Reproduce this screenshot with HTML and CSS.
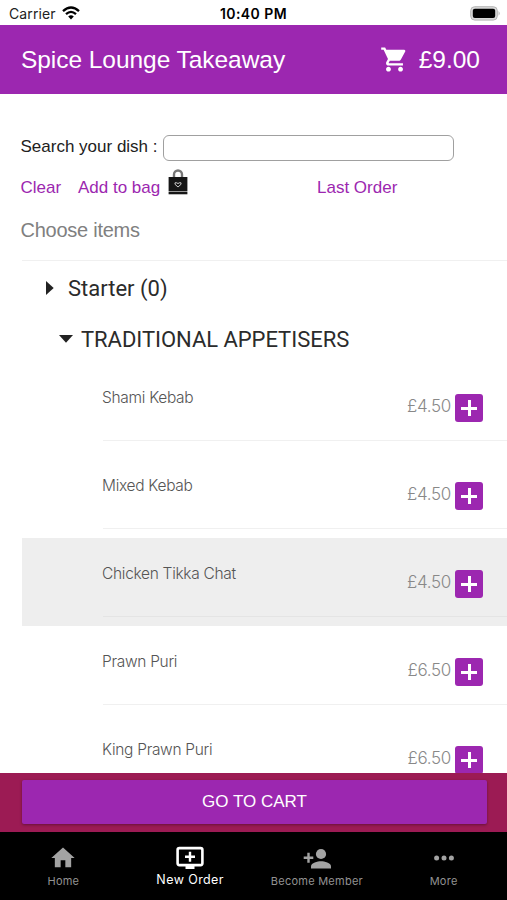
FILE: index.html
```html
<!DOCTYPE html>
<html lang="en">
<head>
<meta charset="utf-8">
<title>Spice Lounge Takeaway</title>
<link rel="stylesheet" href="styles.css">
</head>
<body>
<div class="app">
  <div class="status">
    <span class="carrier">Carrier</span>
    <svg class="wifi" viewBox="0 0 18 14" width="18" height="14"><g fill="none" stroke="#000" stroke-width="2.3"><path d="M1 5.2Q9-2.2 17 5.2"/><path d="M4 8.2Q9 3.6 14 8.2"/></g><path d="M6.2 10.4Q9 8 11.8 10.4L9 13.4Z"/></svg>
    <span class="time">10:40 PM</span>
    <svg class="battery" viewBox="0 0 31 15" width="31" height="15"><rect x=".7" y=".7" width="26.6" height="13.4" rx="4" fill="#d9d9d9" stroke="#b5b5b5" stroke-width="1"/><rect x="2.8" y="2.7" width="22.4" height="9.4" rx="2"/><path d="M28.6 5Q30.6 7.4 28.6 9.8Z" fill="#a9a9a9"/></svg>
  </div>
  <header class="header">
    <h1 class="title">Spice Lounge Takeaway</h1>
    <svg class="cart" viewBox="0 0 24 24" width="29" height="29"><path fill="#fff" d="M7 18c-1.1 0-1.99.9-1.99 2S5.9 22 7 22s2-.9 2-2-.9-2-2-2zM1 2v2h2l3.6 7.59-1.35 2.45c-.16.28-.25.61-.25.96 0 1.1.9 2 2 2h12v-2H7.42c-.14 0-.25-.11-.25-.25l.03-.12.9-1.63h7.45c.75 0 1.41-.41 1.75-1.03l3.58-6.49A1 1 0 0 0 20 4H5.21l-.94-2H1zm16 16c-1.1 0-1.99.9-1.99 2s.89 2 1.99 2 2-.9 2-2-.9-2-2-2z"/></svg>
    <span class="total">£9.00</span>
  </header>
  <main class="content">
    <div class="search"><label for="dish">Search your dish :</label><input id="dish" type="text"></div>
    <div class="links">
      <a class="clear">Clear</a><a class="add">Add to bag</a>
      <svg class="bag" viewBox="0 0 20 26" width="20" height="26"><path d="M6 9V5.5a4 4 0 0 1 8 0V9" fill="none" stroke="#777" stroke-width="2.4"/><path d="M.6 8h18.8v14H.6z" fill="#161616"/><path d="M.6 22h18.800v1H.6z" fill="#999"/><path d="M.6 23h18.800v2.300H.6z" fill="#161616"/><path d="M10 18l-3-2.700v-1.500h1.800l1.200.8 1.200-.8H13v1.500z" fill="none" stroke="#ccc" stroke-width="1"/></svg>
      <a class="last">Last Order</a>
    </div>
    <p class="choose">Choose items</p>
    <section class="menu">
      <h2 class="category"><svg viewBox="0 0 8 14" width="8" height="14"><path d="M0 0l7.7 7L0 14z" fill="#222"/></svg><span>Starter (0)</span></h2>
      <h3 class="subcategory"><svg viewBox="0 0 14 8" width="14" height="8"><path d="M0 0h14L7 7.8z" fill="#222"/></svg><span>TRADITIONAL APPETISERS</span></h3>
      <ul class="dishes">
        <li class="dish"><div class="line"><span class="name">Shami Kebab</span><span class="price">£4.50</span><button class="plus" aria-label="Add"></button></div></li>
        <li class="dish"><div class="line"><span class="name">Mixed Kebab</span><span class="price">£4.50</span><button class="plus" aria-label="Add"></button></div></li>
        <li class="dish active"><div class="line"><span class="name">Chicken Tikka Chat</span><span class="price">£4.50</span><button class="plus" aria-label="Add"></button></div></li>
        <li class="dish"><div class="line"><span class="name">Prawn Puri</span><span class="price">£6.50</span><button class="plus" aria-label="Add"></button></div></li>
        <li class="dish"><div class="line"><span class="name">King Prawn Puri</span><span class="price">£6.50</span><button class="plus" aria-label="Add"></button></div></li>
      </ul>
    </section>
  </main>
  <div class="checkout"><button class="go">GO TO CART</button></div>
  <nav class="tabs">
    <a class="tab home"><svg viewBox="0 0 24 24" width="28" height="28"><path fill="#a3a3a3" d="M10 20v-6h4v6h5v-8h3L12 3 2 12h3v8z"/></svg><span>Home</span></a>
    <a class="tab new"><svg viewBox="0 0 28 24" width="28" height="24"><rect x="1.6" y="2.1" width="24.8" height="17" rx="1.8" fill="none" stroke="#fff" stroke-width="2.6"/><path d="M9.5 19h9v4h-9z" fill="#fff"/><path d="M14 5.8v10M9 10.8h10" stroke="#fff" stroke-width="2.4"/></svg><span>New Order</span></a>
    <a class="tab member"><svg viewBox="0 0 28 22" width="28" height="22"><circle cx="18" cy="6" r="5.1" fill="#a3a3a3"/><path d="M8 20.5v-2.3c0-3.4 6.6-5 10-5s10 1.600 10 5v2.300z" fill="#a3a3a3"/><path d="M5.500 4.700v10M.7 9.700h9.600" stroke="#a3a3a3" stroke-width="2.400"/></svg><span>Become Member</span></a>
    <a class="tab more"><svg viewBox="0 0 20 6" width="20" height="6"><g fill="#a3a3a3"><circle cx="2.600" cy="3" r="2.500"/><circle cx="10" cy="3" r="2.500"/><circle cx="17.400" cy="3" r="2.500"/></g></svg><span>More</span></a>
  </nav>
</div>
</body>
</html>
```
FILE: styles.css
```css
* { box-sizing: border-box; }
body { margin: 0; font-family: "Liberation Sans", Arial, sans-serif; background: #fff; }
h1, h2, h3, p, ul { margin: 0; padding: 0; font-weight: 400; }
ul { list-style: none; }
svg { display: block; flex: none; }
span, a, label { white-space: nowrap; }
.app { width: 507px; height: 900px; display: flex; flex-direction: column; overflow: hidden; }

.status { flex: none; height: 25px; display: grid; grid-template-columns: 53px 1fr auto 1fr 31px; align-items: center; padding: 2px 6px 0 9px; font-family: Inter, sans-serif; font-size: 14px; color: #222; }
.carrier { letter-spacing: .1px; }
.wifi { margin-bottom: 1px; }
.time { grid-column: 3; font-weight: 600; color: #000; font-size: 14px; letter-spacing: .45px; margin-right: 25px; }
.battery { grid-column: 5; }

.header { flex: none; height: 69px; background: #9c27b0; color: #fff; display: flex; align-items: center; padding: 0 27px 0 21px; }
.title { font-size: 24.5px; letter-spacing: -.05px; flex: 1; white-space: nowrap; padding-top: 1px; }
.cart { margin-right: 10px; }
.total { font-size: 24.5px; padding-top: 1px; }

.content { flex: 1; min-height: 0; overflow: hidden; padding-top: 41px; }
.search { height: 26px; display: flex; align-items: center; padding-left: 20.5px; font-size: 17px; color: #212121; }
.search label { width: 142.5px; padding-bottom: 3px; }
.search input { width: 291px; height: 26px; border: 1.5px solid #a0a0a0; border-radius: 6px; background: #fff; }
.links { height: 42px; display: flex; align-items: flex-start; padding: 7px 0 0 20.5px; font-size: 17px; line-height: 40px; color: #9c27b0; }
.clear { width: 57.5px; }
.add { width: 90px; }
.links a { height: 40px; }
.bag { margin-top: 1px; }
.last { margin-left: 129px; }
.choose { height: 57px; line-height: 54px; padding-left: 20.5px; font-size: 20px; letter-spacing: -.25px; color: #808080; }

.menu { margin-left: 22px; border-top: 1px solid #f0f0f0; color: #2b2b2b; font-family: Roboto, sans-serif; }
.category { height: 52px; display: flex; align-items: center; gap: 14px; padding: 2px 0 0 24px; font-size: 22px; }
.subcategory { height: 49px; display: flex; align-items: center; gap: 8px; padding: 3px 0 0 37px; font-size: 22px; letter-spacing: -.04px; }
.dish { height: 88px; padding-left: 81px; }
.line { height: 79px; border-bottom: 1px solid #f0f0f0; display: flex; align-items: flex-start; padding-right: 24px; font-family: Inter, "Liberation Sans", sans-serif; font-weight: 300; }
.active { background: #eee; }
.active .line { border-color: #e4e4e4; }
.name { flex: 1; padding-top: 26px; margin-left: -1px; line-height: 20px; font-size: 15.5px; letter-spacing: -.3px; color: #555; }
.price { padding-top: 34px; line-height: 20px; font-size: 17px; letter-spacing: -.3px; color: #888; margin-right: 4px; }
.plus { width: 28px; height: 28px; margin-top: 32px; border: 0; border-radius: 3px; background: linear-gradient(#fff, #fff) center / 16px 3px no-repeat, linear-gradient(#fff, #fff) center / 3px 16px no-repeat, #9c27b0; }

.checkout { flex: none; height: 59px; background: #9c1b54; padding: 7px 21px 8px 22px; }
.go { display: block; width: 465px; height: 44px; border: 0; border-radius: 2px; background: #9c27b0; color: #fff; font: 17px "Liberation Sans", sans-serif; box-shadow: 0 1px 3px rgba(0, 0, 0, .35); }

.tabs { flex: none; height: 68px; background: #000; display: grid; grid-template-columns: repeat(4, 1fr); font-family: Inter, sans-serif; font-size: 11px; color: #929292; }
.tab { display: flex; flex-direction: column; align-items: center; }
.tab span { margin-top: auto; margin-bottom: 11px; line-height: 16px; letter-spacing: .25px; }
.home svg { margin-top: 12px; }
.new svg { margin-top: 14px; }
.new span { font-size: 12.5px; letter-spacing: .4px; color: #fff; margin-bottom: 12px; }
.member svg { margin-top: 16px; }
.more svg { margin-top: 23px; }
```
